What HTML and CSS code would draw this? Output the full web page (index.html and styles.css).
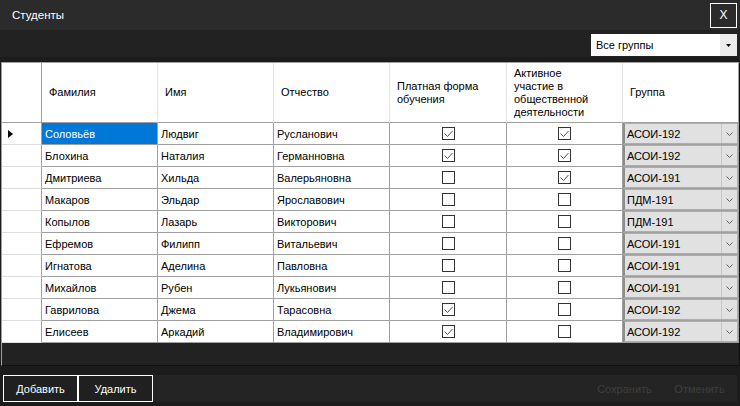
FILE: index.html
```html
<!DOCTYPE html>
<html lang="ru">
<head>
<meta charset="utf-8">
<title>Студенты</title>
<link rel="stylesheet" href="styles.css">
</head>
<body>
<div class="window">
  <div class="titlebar">
    <span class="title">Студенты</span>
    <span class="close">X</span>
  </div>
  <div class="toolbar">
    <div class="filter">
      <span class="filter-text">Все группы</span>
      <span class="filter-btn"><svg width="5" height="3" viewBox="0 0 5 3"><path d="M0 0H5L2.5 3Z" fill="#000"/></svg></span>
    </div>
  </div>
  <div class="grid">
    <div class="row head">
      <div class="cell rh"></div>
      <div class="cell hc">Фамилия</div>
      <div class="cell hc">Имя</div>
      <div class="cell hc">Отчество</div>
      <div class="cell hc">Платная форма<br>обучения</div>
      <div class="cell hc">Активное<br>участие в<br>общественной<br>деятельности</div>
      <div class="cell hc">Группа</div>
    </div>

    <div class="row">
      <div class="cell rh"><span class="arrow"></span></div>
      <div class="cell tc sel">Соловьёв</div>
      <div class="cell tc">Людвиг</div>
      <div class="cell tc">Русланович</div>
      <div class="cell cc"><span class="chk on"><svg width="11" height="11" viewBox="0 0 11 11"><path d="M1.5 5.5L4.5 8.5L9.5 3" fill="none" stroke="#505050" stroke-width="1"/></svg></span></div>
      <div class="cell cc"><span class="chk on"><svg width="11" height="11" viewBox="0 0 11 11"><path d="M1.5 5.5L4.5 8.5L9.5 3" fill="none" stroke="#505050" stroke-width="1"/></svg></span></div>
      <div class="cell gc"><div class="cb"><span class="cb-text">АСОИ-192</span><span class="cb-btn"><svg width="7" height="4" viewBox="0 0 7 4"><path d="M0.5 0.5L3.5 3.5L6.5 0.5" fill="none" stroke="#606060" stroke-width="1"/></svg></span></div></div>
    </div>

    <div class="row">
      <div class="cell rh"></div>
      <div class="cell tc">Блохина</div>
      <div class="cell tc">Наталия</div>
      <div class="cell tc">Германновна</div>
      <div class="cell cc"><span class="chk on"><svg width="11" height="11" viewBox="0 0 11 11"><path d="M1.5 5.5L4.5 8.5L9.5 3" fill="none" stroke="#505050" stroke-width="1"/></svg></span></div>
      <div class="cell cc"><span class="chk on"><svg width="11" height="11" viewBox="0 0 11 11"><path d="M1.5 5.5L4.5 8.5L9.5 3" fill="none" stroke="#505050" stroke-width="1"/></svg></span></div>
      <div class="cell gc"><div class="cb"><span class="cb-text">АСОИ-192</span><span class="cb-btn"><svg width="7" height="4" viewBox="0 0 7 4"><path d="M0.5 0.5L3.5 3.5L6.5 0.5" fill="none" stroke="#606060" stroke-width="1"/></svg></span></div></div>
    </div>

    <div class="row">
      <div class="cell rh"></div>
      <div class="cell tc">Дмитриева</div>
      <div class="cell tc">Хильда</div>
      <div class="cell tc">Валерьяновна</div>
      <div class="cell cc"><span class="chk"></span></div>
      <div class="cell cc"><span class="chk on"><svg width="11" height="11" viewBox="0 0 11 11"><path d="M1.5 5.5L4.5 8.5L9.5 3" fill="none" stroke="#505050" stroke-width="1"/></svg></span></div>
      <div class="cell gc"><div class="cb"><span class="cb-text">АСОИ-191</span><span class="cb-btn"><svg width="7" height="4" viewBox="0 0 7 4"><path d="M0.5 0.5L3.5 3.5L6.5 0.5" fill="none" stroke="#606060" stroke-width="1"/></svg></span></div></div>
    </div>

    <div class="row">
      <div class="cell rh"></div>
      <div class="cell tc">Макаров</div>
      <div class="cell tc">Эльдар</div>
      <div class="cell tc">Ярославович</div>
      <div class="cell cc"><span class="chk"></span></div>
      <div class="cell cc"><span class="chk"></span></div>
      <div class="cell gc"><div class="cb"><span class="cb-text">ПДМ-191</span><span class="cb-btn"><svg width="7" height="4" viewBox="0 0 7 4"><path d="M0.5 0.5L3.5 3.5L6.5 0.5" fill="none" stroke="#606060" stroke-width="1"/></svg></span></div></div>
    </div>

    <div class="row">
      <div class="cell rh"></div>
      <div class="cell tc">Копылов</div>
      <div class="cell tc">Лазарь</div>
      <div class="cell tc">Викторович</div>
      <div class="cell cc"><span class="chk"></span></div>
      <div class="cell cc"><span class="chk"></span></div>
      <div class="cell gc"><div class="cb"><span class="cb-text">ПДМ-191</span><span class="cb-btn"><svg width="7" height="4" viewBox="0 0 7 4"><path d="M0.5 0.5L3.5 3.5L6.5 0.5" fill="none" stroke="#606060" stroke-width="1"/></svg></span></div></div>
    </div>

    <div class="row">
      <div class="cell rh"></div>
      <div class="cell tc">Ефремов</div>
      <div class="cell tc">Филипп</div>
      <div class="cell tc">Витальевич</div>
      <div class="cell cc"><span class="chk"></span></div>
      <div class="cell cc"><span class="chk"></span></div>
      <div class="cell gc"><div class="cb"><span class="cb-text">АСОИ-191</span><span class="cb-btn"><svg width="7" height="4" viewBox="0 0 7 4"><path d="M0.5 0.5L3.5 3.5L6.5 0.5" fill="none" stroke="#606060" stroke-width="1"/></svg></span></div></div>
    </div>

    <div class="row">
      <div class="cell rh"></div>
      <div class="cell tc">Игнатова</div>
      <div class="cell tc">Аделина</div>
      <div class="cell tc">Павловна</div>
      <div class="cell cc"><span class="chk"></span></div>
      <div class="cell cc"><span class="chk"></span></div>
      <div class="cell gc"><div class="cb"><span class="cb-text">АСОИ-191</span><span class="cb-btn"><svg width="7" height="4" viewBox="0 0 7 4"><path d="M0.5 0.5L3.5 3.5L6.5 0.5" fill="none" stroke="#606060" stroke-width="1"/></svg></span></div></div>
    </div>

    <div class="row">
      <div class="cell rh"></div>
      <div class="cell tc">Михайлов</div>
      <div class="cell tc">Рубен</div>
      <div class="cell tc">Лукьянович</div>
      <div class="cell cc"><span class="chk"></span></div>
      <div class="cell cc"><span class="chk"></span></div>
      <div class="cell gc"><div class="cb"><span class="cb-text">АСОИ-191</span><span class="cb-btn"><svg width="7" height="4" viewBox="0 0 7 4"><path d="M0.5 0.5L3.5 3.5L6.5 0.5" fill="none" stroke="#606060" stroke-width="1"/></svg></span></div></div>
    </div>

    <div class="row">
      <div class="cell rh"></div>
      <div class="cell tc">Гаврилова</div>
      <div class="cell tc">Джема</div>
      <div class="cell tc">Тарасовна</div>
      <div class="cell cc"><span class="chk on"><svg width="11" height="11" viewBox="0 0 11 11"><path d="M1.5 5.5L4.5 8.5L9.5 3" fill="none" stroke="#505050" stroke-width="1"/></svg></span></div>
      <div class="cell cc"><span class="chk"></span></div>
      <div class="cell gc"><div class="cb"><span class="cb-text">АСОИ-192</span><span class="cb-btn"><svg width="7" height="4" viewBox="0 0 7 4"><path d="M0.5 0.5L3.5 3.5L6.5 0.5" fill="none" stroke="#606060" stroke-width="1"/></svg></span></div></div>
    </div>

    <div class="row">
      <div class="cell rh"></div>
      <div class="cell tc">Елисеев</div>
      <div class="cell tc">Аркадий</div>
      <div class="cell tc">Владимирович</div>
      <div class="cell cc"><span class="chk on"><svg width="11" height="11" viewBox="0 0 11 11"><path d="M1.5 5.5L4.5 8.5L9.5 3" fill="none" stroke="#505050" stroke-width="1"/></svg></span></div>
      <div class="cell cc"><span class="chk"></span></div>
      <div class="cell gc"><div class="cb"><span class="cb-text">АСОИ-192</span><span class="cb-btn"><svg width="7" height="4" viewBox="0 0 7 4"><path d="M0.5 0.5L3.5 3.5L6.5 0.5" fill="none" stroke="#606060" stroke-width="1"/></svg></span></div></div>
    </div>
  </div>
  <div class="footer">
    <div class="footer-bar">
      <span class="btn">Добавить</span>
      <span class="btn">Удалить</span>
      <span class="spacer"></span>
      <span class="btn disabled">Сохранить</span>
      <span class="btn disabled">Отменить</span>
    </div>
  </div>
</div>
</body>
</html>
```

FILE: styles.css
```css
* { box-sizing: border-box; }
html, body { margin: 0; padding: 0; }
body {
  width: 740px;
  height: 406px;
  overflow: hidden;
  background: #1c1c1c;
  font-family: "Liberation Sans", Arial, sans-serif;
  font-size: 11px;
  color: #000;
}
.window { width: 740px; height: 406px; display: flex; flex-direction: column; }

.titlebar {
  height: 30px;
  background: #2b2b2b;
  display: flex;
  align-items: center;
  justify-content: space-between;
  padding: 0 3px 0 12px;
}
.title { color: #fff; font-size: 11.5px; }
.close {
  width: 27px;
  height: 25px;
  border: 1px solid #fff;
  color: #fff;
  font-size: 12px;
  display: flex;
  align-items: center;
  justify-content: center;
}

.toolbar {
  height: 27px;
  background: #222;
  display: flex;
  justify-content: flex-end;
  align-items: flex-start;
  padding: 4px 3px 0 0;
}
.filter {
  width: 146px;
  height: 22px;
  background: #fff;
  display: flex;
  align-items: stretch;
}
.filter-text { flex: 1; padding-left: 5px; display: flex; align-items: center; }
.filter-btn {
  width: 17px;
  background: #ececec;
  display: flex;
  align-items: center;
  justify-content: center;
}

.grid {
  margin: 5px 0 0 1px;
  width: 739px;
  height: 304px;
  background: #222;
  border-top: 1px solid #a0a0a0;
  border-left: 1px solid #a0a0a0;
  border-right: 1px solid #111;
  border-bottom: 1px solid #111;
}
.row {
  display: grid;
  grid-template-columns: 40px 116px 116px 116px 117px 116px 116px;
  height: 22px;
}
.row.head { height: 60px; }
.cell {
  background: #fff;
  border-right: 1px solid #a0a0a0;
  border-bottom: 1px solid #a0a0a0;
  display: flex;
  align-items: center;
  white-space: nowrap;
  overflow: hidden;
}
.rh { border-bottom-color: #dedede; }
.head .rh { border-bottom-color: #a0a0a0; }
.hc {
  border-right-color: #e3e3e3;
  padding-left: 7px;
  line-height: 13px;
  white-space: normal;
}
.head .hc:last-child { border-right-color: #a0a0a0; }
.tc { padding-left: 3px; }
.sel { background: #0078d7; color: #fff; }
.cc { justify-content: center; }
.chk {
  width: 13px;
  height: 13px;
  border: 1px solid #333;
  background: #fff;
  display: flex;
}
.arrow {
  margin-left: 6px;
  width: 0;
  height: 0;
  border-top: 4px solid transparent;
  border-bottom: 4px solid transparent;
  border-left: 5px solid #000;
}

.gc { padding: 0; align-items: stretch; }
.cb {
  flex: 1;
  display: flex;
  background: #e1e1e1;
  border: 1px solid #adadad;
  border-left: 2px solid #8c8c8c;
}
.cb-text { flex: 1; padding-left: 2px; display: flex; align-items: center; }
.cb-btn {
  width: 16px;
  border-left: 1px solid #c8c8c8;
  display: flex;
  align-items: center;
  justify-content: center;
}

.footer {
  flex: 1;
  padding: 9px 3px 4px 3px;
}
.footer-bar {
  height: 27px;
  display: flex;
  background: #242424;
}
.btn {
  width: 75px;
  border: 1px solid #fff;
  background: #202020;
  color: #fff;
  display: flex;
  align-items: center;
  justify-content: center;
}
.spacer { flex: 1; }
.btn.disabled {
  border-color: transparent;
  background: transparent;
  color: #3e3e3e;
}
```
